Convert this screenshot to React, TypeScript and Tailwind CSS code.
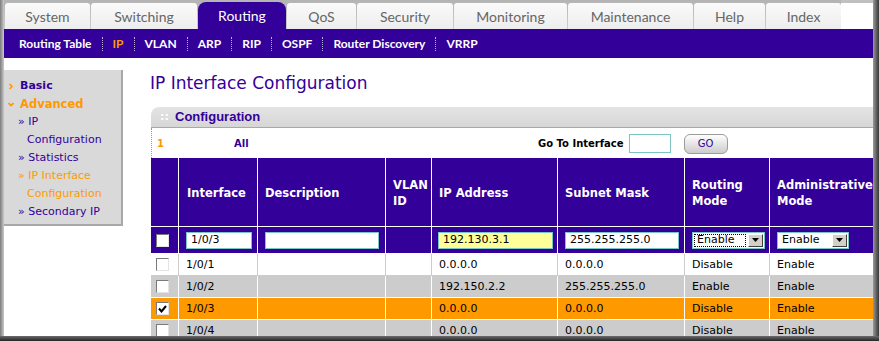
import React from "react";

const tabs = [
  { label: "System", w: "w-[85px]" },
  { label: "Switching", w: "w-[106px]" },
  { label: "Routing", w: "w-[88px]", active: true },
  { label: "QoS", w: "w-[69px]" },
  { label: "Security", w: "w-[96px]" },
  { label: "Monitoring", w: "w-[113px]" },
  { label: "Maintenance", w: "w-[125px]" },
  { label: "Help", w: "w-[71px]" },
  { label: "Index", w: "w-[75px]" },
];

const subnav = ["Routing Table", "IP", "VLAN", "ARP", "RIP", "OSPF", "Router Discovery", "VRRP"];

const rows = [
  { intf: "1/0/1", ip: "0.0.0.0", mask: "0.0.0.0", routing: "Disable", admin: "Enable", bg: "bg-white", line: "border-[#cccccc]" },
  { intf: "1/0/2", ip: "192.150.2.2", mask: "255.255.255.0", routing: "Enable", admin: "Enable", bg: "bg-[#cccccc]", line: "border-white" },
  { intf: "1/0/3", ip: "0.0.0.0", mask: "0.0.0.0", routing: "Disable", admin: "Enable", bg: "bg-[#ff9900]", line: "border-white", checked: true },
  { intf: "1/0/4", ip: "0.0.0.0", mask: "0.0.0.0", routing: "Disable", admin: "Enable", bg: "bg-[#cccccc]", line: "border-white" },
];

const cols = "grid grid-cols-[28px_79px_128px_46px_126px_127px_85px_110px]";

const Checkbox = ({ checked }: { checked?: boolean }) => (
  <div className="w-[13px] h-[13px] bg-white border border-t-[#7a7a7a] border-l-[#7a7a7a] border-b-[#e4e4e4] border-r-[#e4e4e4] flex items-center justify-center">
    {checked && (
      <svg width="9" height="8" viewBox="0 0 9 8">
        <path d="M1 3.5 L3.5 6.5 L8 1" stroke="#000" strokeWidth="2" fill="none" />
      </svg>
    )}
  </div>
);

const TextBox = ({ value, w, yellow }: { value: string; w: string; yellow?: boolean }) => (
  <div className={`${w} h-[17px] border border-[#7fc4c4] ${yellow ? "bg-[#ffff99]" : "bg-white"} flex items-center pl-[4px] pt-[1px] text-[11px] text-black`}>
    {value}
  </div>
);

const Select = ({ value, w, focused }: { value: string; w: string; focused?: boolean }) => (
  <div className={`${w} h-[17px] border border-[#7fc4c4] bg-white flex items-center justify-between pl-[1px] pr-[1px] text-[11px] text-black`}>
    <span className={`flex-1 h-[13px] flex items-center pl-[2px] pt-[1px] mr-[2px] border border-dotted ${focused ? "border-black" : "border-transparent"}`}>
      {value}
    </span>
    <span className="w-[15px] h-[13px] bg-[#d4d0c8] border border-t-white border-l-white border-b-[#404040] border-r-[#404040] flex items-center justify-center">
      <svg width="7" height="4" viewBox="0 0 7 4">
        <path d="M0 0 H7 L3.5 4 Z" fill="#000" />
      </svg>
    </span>
  </div>
);

const Chevron = ({ down }: { down?: boolean }) => (
  <svg width="6" height="7" viewBox="0 0 6 7" className="ml-[1px] mr-[6px]">
    {down ? (
      <path d="M0.5 2 L3 4.5 L5.5 2" stroke="#ff9900" strokeWidth="1.6" fill="none" />
    ) : (
      <path d="M1.5 1 L4 3.5 L1.5 6" stroke="#ff9900" strokeWidth="1.6" fill="none" />
    )}
  </svg>
);

export default function App() {
  return (
    <div className="w-[879px] h-[341px] flex flex-col overflow-hidden bg-white font-['DejaVu_Sans',sans-serif]">
      <div className="flex h-[336px] shrink-0">
        <div className="w-[4px] shrink-0 bg-gradient-to-r from-[#7c7c7c] to-[#cacaca]" />
        <div className="flex-1 flex flex-col overflow-hidden">
          {/* Tabs */}
          <div className="flex h-[29px] shrink-0 bg-white">
            <div className="flex gap-[1px] pl-[1px] pt-[3px] bg-gradient-to-b from-[#b4b4b4] to-[#cdcdcd]">
              {tabs.map((t) =>
                t.active ? (
                  <div
                    key={t.label}
                    className={`${t.w} -mt-[1px] rounded-t-[8px] bg-[#330099] flex items-center justify-center text-white text-[14px] font-['Lato',sans-serif]`}
                  >
                    {t.label}
                  </div>
                ) : (
                  <div
                    key={t.label}
                    className={`${t.w} rounded-t-[3px] bg-gradient-to-b from-[#fafafa] to-[#ededed] flex items-center justify-center text-[#666666] text-[14px] font-['Lato',sans-serif]`}
                  >
                    {t.label}
                  </div>
                )
              )}
            </div>
            <div className="flex-1 border-t-[3px] border-[#c0c0c0]" />
          </div>

          {/* Sub navigation */}
          <div className="h-[29px] shrink-0 bg-[#330099] flex items-center pl-[15px] gap-[10px] font-['Lato',sans-serif] font-bold text-[12px]">
            {subnav.map((s, i) => (
              <React.Fragment key={s}>
                {i > 0 && <span className="h-[14px] border-l border-dotted border-[#b8b0e0]" />}
                <span className={s === "IP" ? "text-[#ff9900]" : "text-white"}>{s}</span>
              </React.Fragment>
            ))}
          </div>

          {/* Body */}
          <div className="flex flex-1 min-h-0">
            <div className="mt-[12px] w-[119px] h-[156px] bg-[#d9d9d9] border-r-2 border-b-2 border-r-[#a8a8a8] border-b-[#a8a8a8] pt-[7px] pl-[3px] text-[11px] leading-[18px] text-[#330099] shrink-0">
              <div className="flex items-center font-bold">
                <Chevron />
                Basic
              </div>
              <div className="flex items-center font-bold text-[#ff9900] text-[11.5px]">
                <Chevron down />
                Advanced
              </div>
              <div className="pl-[11px]">» IP</div>
              <div className="pl-[20px]">Configuration</div>
              <div className="pl-[11px]">» Statistics</div>
              <div className="pl-[11px] text-[#ff9900]">» IP Interface</div>
              <div className="pl-[20px] text-[#ff9900]">Configuration</div>
              <div className="pl-[11px]">» Secondary IP</div>
            </div>

            <div className="ml-[27px] flex-1 pt-[15px] min-w-0">
              <h1 className="text-[17px] leading-[20px] text-[#330099]">IP Interface Configuration</h1>

              <div className="mt-[14px] ml-[1px]">
                <div className="h-[21px] rounded-tl-[8px] bg-gradient-to-b from-[#e4e4e4] to-[#d6d6d6] border-b border-[#a9a9a9] flex items-center pl-[9px]">
                  <span className="w-[15px] text-white font-bold text-[11px]">::</span>
                  <span className="text-[#330099] font-bold text-[13px] font-['Liberation_Sans',sans-serif]">Configuration</span>
                </div>

                <div className="h-[30px] border-l border-dotted border-[#9a9a9a] flex items-center pl-[5px] pt-[1px] text-[10px] font-bold">
                  <span className="w-[77px] text-[#ff9900]">1</span>
                  <span className="w-[304px] text-[#330099]">All</span>
                  <span className="text-black">Go To Interface</span>
                  <div className="ml-[5px] w-[42px] h-[19px] border border-[#7fc4c4] bg-white" />
                  <div className="ml-[13px] w-[44px] h-[20px] rounded-[6px] border border-[#9c9c9c] bg-gradient-to-b from-white to-[#cccccc] flex items-center justify-center text-[#330099] text-[10px] font-normal">
                    GO
                  </div>
                </div>

                {/* Table header */}
                <div className={`${cols} h-[69px] bg-[#330099] text-white font-bold text-[11.5px] leading-[16px]`}>
                  {["", "Interface", "Description", "VLAN ID", "IP Address", "Subnet Mask", "Routing Mode", "Administrative Mode"].map((h, i) => (
                    <div key={i} className={`border-r border-b border-white flex items-center pt-[2px] ${i === 1 ? "pl-[8px]" : "pl-[7px]"}`}>
                      <span className={i === 3 ? "w-[34px]" : i >= 6 ? "w-[60px]" : ""}>{h}</span>
                    </div>
                  ))}
                </div>

                {/* Edit row */}
                <div className={`${cols} h-[27px] bg-[#330099]`}>
                  <div className="border-r border-b border-white flex items-center pl-[5px]">
                    <Checkbox />
                  </div>
                  <div className="border-r border-b border-white flex items-center pl-[7px]">
                    <TextBox value="1/0/3" w="w-[66px]" />
                  </div>
                  <div className="border-r border-b border-white flex items-center pl-[7px]">
                    <TextBox value="" w="w-[114px]" />
                  </div>
                  <div className="border-r border-b border-white" />
                  <div className="border-r border-b border-white flex items-center pl-[6px]">
                    <TextBox value="192.130.3.1" w="w-[115px]" yellow />
                  </div>
                  <div className="border-r border-b border-white flex items-center pl-[7px]">
                    <TextBox value="255.255.255.0" w="w-[114px]" />
                  </div>
                  <div className="border-r border-b border-white flex items-center pl-[7px]">
                    <Select value="Enable" w="w-[73px]" focused />
                  </div>
                  <div className="border-r border-b border-white flex items-center pl-[7px]">
                    <Select value="Enable" w="w-[72px]" />
                  </div>
                </div>

                {/* Data rows */}
                {rows.map((r) => (
                  <div key={r.intf + r.ip} className={`${cols} h-[22px] ${r.bg} text-[11px] text-black`}>
                    <div className={`border-r border-b ${r.line} flex items-center pl-[5px]`}>
                      <Checkbox checked={r.checked} />
                    </div>
                    <div className={`border-r border-b ${r.line} flex items-center pl-[7px] pt-[2px]`}>{r.intf}</div>
                    <div className={`border-r border-b ${r.line}`} />
                    <div className={`border-r border-b ${r.line}`} />
                    <div className={`border-r border-b ${r.line} flex items-center pl-[7px] pt-[2px]`}>{r.ip}</div>
                    <div className={`border-r border-b ${r.line} flex items-center pl-[7px] pt-[2px]`}>{r.mask}</div>
                    <div className={`border-r border-b ${r.line} flex items-center pl-[7px] pt-[2px]`}>{r.routing}</div>
                    <div className={`border-r border-b ${r.line} flex items-center pl-[7px] pt-[2px]`}>{r.admin}</div>
                  </div>
                ))}
              </div>
            </div>
          </div>
        </div>
        <div className="w-[6px] shrink-0 bg-gradient-to-r from-[#9a9a9a] to-[#383838]" />
      </div>
      <div className="h-[5px] shrink-0 bg-gradient-to-b from-[#6c6c6c] to-[#262626]" />
    </div>
  );
}
